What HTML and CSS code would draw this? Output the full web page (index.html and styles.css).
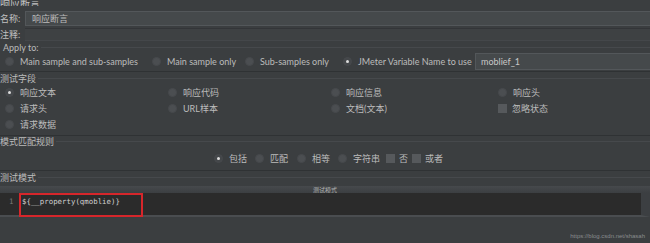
FILE: index.html
```html
<!DOCTYPE html>
<html>
<head>
<meta charset="utf-8">
<link rel="stylesheet" href="styles.css">
</head>
<body>
<div class="page">
  <div class="title">响应断言</div>
  <div class="field-row name-row">
    <span class="label">名称:</span>
    <div class="input">响应断言</div>
  </div>
  <div class="field-row comment-row">
    <span class="label">注释:</span>
    <div class="input flat"></div>
  </div>

  <fieldset class="group apply">
    <legend>Apply to:</legend>
    <div class="apply-row">
      <label class="opt w147"><span class="radio"></span>Main sample and sub-samples</label>
      <label class="opt w93"><span class="radio"></span>Main sample only</label>
      <label class="opt w98"><span class="radio"></span>Sub-samples only</label>
      <label class="opt w132"><span class="radio on"></span>JMeter Variable Name to use</label>
      <div class="var-input">moblief_1</div>
    </div>
  </fieldset>

  <fieldset class="group fields">
    <legend>测试字段</legend>
    <div class="grid4">
      <label class="opt"><span class="radio on"></span>响应文本</label>
      <label class="opt"><span class="radio"></span>响应代码</label>
      <label class="opt"><span class="radio"></span>响应信息</label>
      <label class="opt"><span class="radio"></span>响应头</label>
      <label class="opt"><span class="radio"></span>请求头</label>
      <label class="opt"><span class="radio"></span>URL样本</label>
      <label class="opt"><span class="radio"></span>文档(文本)</label>
      <label class="opt"><span class="check"></span>忽略状态</label>
      <label class="opt"><span class="radio"></span>请求数据</label>
    </div>
  </fieldset>

  <fieldset class="group rules">
    <legend>模式匹配规则</legend>
    <div class="rule-row">
      <label class="opt r41"><span class="radio on"></span>包括</label>
      <label class="opt r42"><span class="radio"></span>匹配</label>
      <label class="opt r41"><span class="radio"></span>相等</label>
      <label class="opt r48"><span class="radio"></span>字符串</label>
      <label class="opt r26"><span class="check"></span>否</label>
      <label class="opt"><span class="check"></span>或者</label>
    </div>
  </fieldset>

  <fieldset class="group patterns">
    <legend>测试模式</legend>
    <div class="table-head">测试模式</div>
    <div class="editor">
      <span class="lineno">1</span>
      <span class="code">${__property(qmoblie)}</span>
      <span class="highlight"></span>
    </div>
  </fieldset>
  <div class="watermark">https://blog.csdn.net/shasah</div>
</div>
</body>
</html>
```
FILE: styles.css
```css
* { box-sizing: border-box; }
html, body { margin: 0; padding: 0; }
body {
  background: #3b3e40;
  color: #bcbcbc;
  font-family: "Lato", "Noto Sans CJK SC", sans-serif;
  font-size: 9px;
  width: 650px;
  height: 243px;
  overflow: hidden;
}
.page { position: relative; height: 243px; }
.title {
  font-size: 10px;
  height: 6px;
  line-height: 6px;
  overflow: hidden;
  display: flex;
  align-items: flex-end;
  color: #c4c4c4;
}
.field-row { display: flex; align-items: center; }
.label { width: 25px; flex: none; color: #c0c0c0; }
.name-row { margin-top: 4px; height: 17px; }
.name-row .input {
  flex: 1;
  height: 15px;
  background: #45494b;
  border: 1px solid #53575a;
  border-right: none;
  padding-left: 6px;
  line-height: 13px;
}
.comment-row { height: 14px; }
.comment-row .input.flat {
  flex: 1;
  height: 13px;
  background: #3e4143;
  border-top: 1px solid #333538;
  border-bottom: 1px solid #44474a;
}
.group {
  margin: 0;
  padding: 0;
  border: none;
  border-top: 1px solid #46494c;
  border-bottom: 1px solid #2f3234;
  min-width: 0;
}
.group legend {
  padding: 0 2px 0 0;
  margin-left: 0;
  line-height: 11px;
  height: 11px;
}
.apply { margin-top: 1px; height: 30px; }
.apply legend { padding-left: 3px; }
.apply-row { display: flex; align-items: center; height: 17px; padding-left: 5px; }
.opt { display: flex; align-items: center; white-space: nowrap; flex: none; }
.w147 { width: 147px; }
.w93 { width: 93px; }
.w98 { width: 98px; }
.w132 { width: 132px; }
.radio {
  width: 9px; height: 9px; border-radius: 50%;
  background: #4b4e51;
  border: 1px solid #47494c;
  margin-right: 6px;
  flex: none;
  position: relative;
}
.radio.on { background: #44474a; }
.radio.on::after {
  content: ""; position: absolute; left: 2px; top: 2px;
  width: 3px; height: 3px; border-radius: 50%; background: #dcdcdc;
}
.check {
  width: 9px; height: 9px; background: #56595c; margin-right: 5px; flex: none;
}
.var-input {
  flex: 1;
  height: 17px;
  background: #45494b;
  border: 1px solid #53575a;
  border-right: none;
  padding-left: 5px;
  line-height: 15px;
  color: #c8c8c8;
}
.fields { margin-top: 1px; height: 63px; }
.grid4 {
  display: grid;
  grid-template-columns: 163px 163px 167px 1fr;
  grid-auto-rows: 16px;
  padding-left: 5px;
  align-items: center;
}
.rules { margin-top: 0; height: 35px; }
.rule-row {
  display: flex; align-items: center;
  padding-left: 214px; padding-top: 3px; height: 20px;
}
.r41 { width: 41px; }
.r42 { width: 42px; }
.r48 { width: 48px; }
.r26 { width: 26px; }
.rule-row .check { margin-right: 4px; }
.patterns { margin-top: 1px; border-bottom: none; }
.table-head {
  margin-top: 3px;
  height: 7px;
  line-height: 7px;
  font-size: 6px;
  text-align: center;
  background: linear-gradient(#46494c, #3c3f42);
  color: #b4b4b4;
}
.editor {
  position: relative;
  height: 24px;
  background: #2b2b2b;
  border-bottom: 2px solid #4a4d50;
  border-right: 9px solid #3c3f42;
  display: flex;
  align-items: flex-start;
  padding-top: 4px;
  font-family: "DejaVu Sans Mono", monospace;
  font-size: 7.4px;
}
.lineno { width: 22px; padding-left: 9px; color: #7a7a7a; }
.code { color: #d0d0d0; }
.highlight {
  position: absolute;
  left: 19px; top: 0;
  width: 124px; height: 24px;
  border: 2px solid #d6262b;
}
.watermark {
  position: absolute;
  right: 5px; bottom: 4px;
  font-size: 6px;
  color: #8a8c8e;
  font-family: "Liberation Sans", sans-serif;
}
```
